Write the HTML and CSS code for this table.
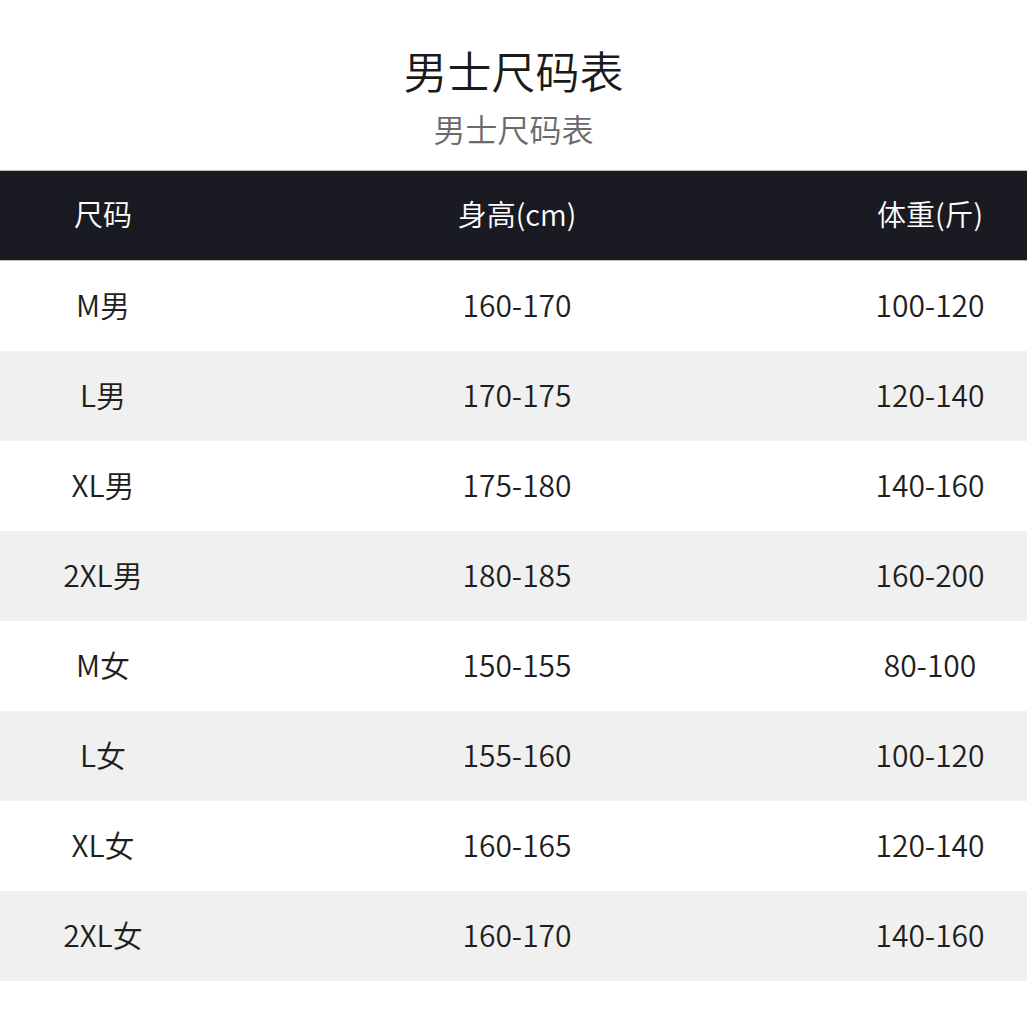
FILE: index.html
```html
<!DOCTYPE html>
<html lang="zh-CN">
<head>
<meta charset="utf-8">
<title>男士尺码表</title>
<link rel="stylesheet" href="styles.css">
</head>
<body>
<div class="page">
  <header class="heading">
    <h1 class="title">男士尺码表</h1>
    <p class="subtitle">男士尺码表</p>
  </header>
  <div class="table">
    <div class="row head"><div>尺码</div><div class="mid">身高(cm)</div><div>体重(斤)</div></div>
    <div class="row"><div>M男</div><div class="mid">160-170</div><div>100-120</div></div>
    <div class="row alt"><div>L男</div><div class="mid">170-175</div><div>120-140</div></div>
    <div class="row"><div>XL男</div><div class="mid">175-180</div><div>140-160</div></div>
    <div class="row alt"><div>2XL男</div><div class="mid">180-185</div><div>160-200</div></div>
    <div class="row"><div>M女</div><div class="mid">150-155</div><div>80-100</div></div>
    <div class="row alt"><div>L女</div><div class="mid">155-160</div><div>100-120</div></div>
    <div class="row"><div>XL女</div><div class="mid">160-165</div><div>120-140</div></div>
    <div class="row alt"><div>2XL女</div><div class="mid">160-170</div><div>140-160</div></div>
  </div>
</div>
</body>
</html>
```
FILE: styles.css
```css
html, body {
  margin: 0;
  padding: 0;
  background: #ffffff;
}
body {
  font-family: "Noto Sans CJK SC", "Noto Sans", sans-serif;
  color: #222;
}
.page {
  width: 1027px;
}
.heading {
  text-align: center;
  padding-top: 42px;
  padding-bottom: 22px;
}
.title {
  margin: 0;
  font-size: 44px;
  line-height: 56px;
  font-weight: 350;
  color: #1a1a1a;
}
.subtitle {
  margin: 10px 0 0;
  font-size: 32px;
  line-height: 40px;
  font-weight: 350;
  color: #6a6a6a;
}
.table {
  display: flex;
  flex-direction: column;
}
.row {
  display: grid;
  grid-template-columns: 206px 1fr 194px;
  height: 90px;
  align-items: center;
  text-align: center;
  font-size: 30px;
  line-height: 40px;
  font-weight: 350;
  color: #1e1e1e;
  padding-bottom: 5px;
  box-sizing: border-box;
}
.row .mid {
  padding-right: 5px;
}
.row.alt {
  background: #f0f0f0;
}
.row.head {
  background: #1a1b22;
  color: #ffffff;
  font-size: 29px;
  font-weight: 350;
  border-top: 1px solid #b8b8b8;
  border-bottom: 1px solid #b8b8b8;
  height: 91px;
  padding-bottom: 5px;
}
```
